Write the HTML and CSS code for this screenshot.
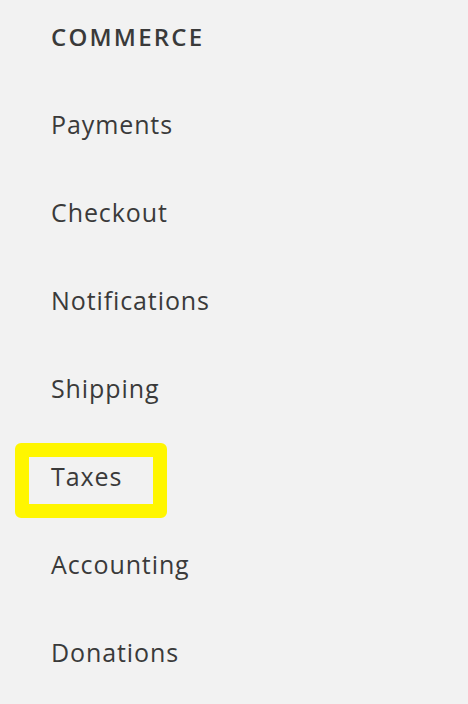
FILE: index.html
```html
<!DOCTYPE html>
<html>
<head>
<meta charset="utf-8">
<link rel="stylesheet" href="styles.css">
</head>
<body>
<nav class="menu">
  <h2 class="menu-title">COMMERCE</h2>
  <ul class="menu-list">
    <li class="menu-item">Payments</li>
    <li class="menu-item">Checkout</li>
    <li class="menu-item">Notifications</li>
    <li class="menu-item">Shipping</li>
    <li class="menu-item menu-item--highlight"><span class="highlight-label">Taxes</span></li>
    <li class="menu-item">Accounting</li>
    <li class="menu-item">Donations</li>
  </ul>
</nav>
</body>
</html>
```
FILE: styles.css
```css
html, body {
  margin: 0;
  padding: 0;
  background: #f2f2f2;
}
body {
  width: 468px;
  height: 704px;
  overflow: hidden;
  font-family: "Open Sans", "Noto Sans", sans-serif;
  color: #3a3a3a;
}
.menu {
  padding-left: 51px;
}
.menu-title {
  margin: 0;
  height: 76px;
  line-height: 74px;
  font-size: 24px;
  font-weight: 600;
  letter-spacing: 2.2px;
}
.menu-list {
  list-style: none;
  margin: 6px 0 0;
  padding: 0;
}
.menu-item {
  height: 88px;
  line-height: 84px;
  font-size: 25px;
  letter-spacing: 0.9px;
}
.menu-item--highlight {
  position: relative;
}
.highlight-label {
  position: relative;
}
.menu-item--highlight::after {
  content: "";
  position: absolute;
  left: -36px;
  top: 9px;
  width: 124px;
  height: 47px;
  border: 14px solid #fff600;
  border-radius: 6px;
}
```
